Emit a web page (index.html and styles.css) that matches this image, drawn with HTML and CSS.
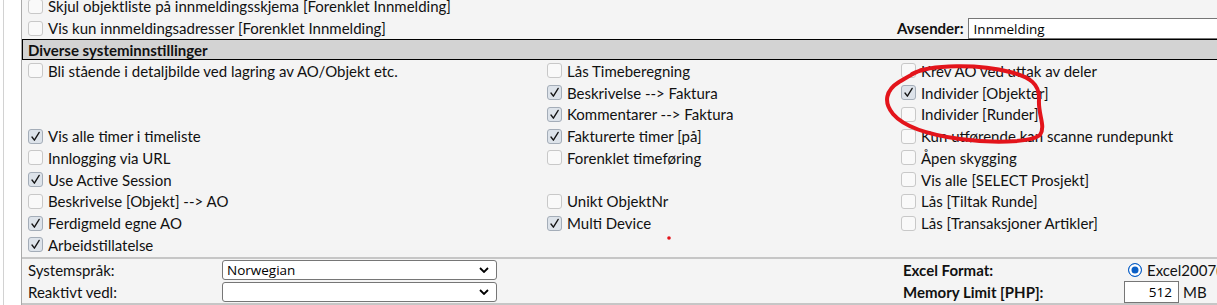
FILE: index.html
```html
<!DOCTYPE html>
<html lang="no">
<head>
<meta charset="utf-8">
<title>Systeminnstillinger</title>
<link rel="stylesheet" href="styles.css">
</head>
<body>
<div class="frame">
  <div class="panel">
    <div class="top">
      <div class="row">
        <label class="opt"><input type="checkbox"><span>Skjul objektliste på innmeldingsskjema [Forenklet Innmelding]</span></label>
      </div>
      <div class="row split">
        <label class="opt"><input type="checkbox"><span>Vis kun innmeldingsadresser [Forenklet Innmelding]</span></label>
        <div class="sender"><b>Avsender:</b><input class="field wide" type="text" value="Innmelding"></div>
      </div>
    </div>
    <div class="head">Diverse systeminnstillinger</div>
    <div class="grid">
      <label class="opt"><input type="checkbox"><span>Bli stående i detaljbilde ved lagring av AO/Objekt etc.</span></label>
      <label class="opt"><input type="checkbox"><span>Lås Timeberegning</span></label>
      <label class="opt"><input type="checkbox"><span>Krev AO ved uttak av deler</span></label>

      <span></span>
      <label class="opt"><input type="checkbox" checked><span>Beskrivelse --&gt; Faktura</span></label>
      <label class="opt"><input type="checkbox" checked><span>Individer [Objekter]</span></label>

      <span></span>
      <label class="opt"><input type="checkbox" checked><span>Kommentarer --&gt; Faktura</span></label>
      <label class="opt"><input type="checkbox"><span>Individer [Runder]</span></label>

      <label class="opt"><input type="checkbox" checked><span>Vis alle timer i timeliste</span></label>
      <label class="opt"><input type="checkbox" checked><span>Fakturerte timer [på]</span></label>
      <label class="opt"><input type="checkbox"><span>Kun utførende kan scanne rundepunkt</span></label>

      <label class="opt"><input type="checkbox"><span>Innlogging via URL</span></label>
      <label class="opt"><input type="checkbox"><span>Forenklet timeføring</span></label>
      <label class="opt"><input type="checkbox"><span>Åpen skygging</span></label>

      <label class="opt"><input type="checkbox" checked><span>Use Active Session</span></label>
      <span></span>
      <label class="opt"><input type="checkbox"><span>Vis alle [SELECT Prosjekt]</span></label>

      <label class="opt"><input type="checkbox"><span>Beskrivelse [Objekt] --&gt; AO</span></label>
      <label class="opt"><input type="checkbox"><span>Unikt ObjektNr</span></label>
      <label class="opt"><input type="checkbox"><span>Lås [Tiltak Runde]</span></label>

      <label class="opt"><input type="checkbox" checked><span>Ferdigmeld egne AO</span></label>
      <label class="opt"><input type="checkbox" checked><span>Multi Device</span></label>
      <label class="opt"><input type="checkbox"><span>Lås [Transaksjoner Artikler]</span></label>

      <label class="opt"><input type="checkbox" checked><span>Arbeidstillatelse</span></label>
      <span></span>
      <span></span>
    </div>
    <div class="bottom">
      <span class="lbl">Systemspråk:</span>
      <select class="sel"><option>Norwegian</option></select>
      <span></span>
      <b class="lbl">Excel Format:</b>
      <label class="radio"><input type="radio" name="xf" checked><span>Excel2007(xlsx)</span></label>

      <span class="lbl">Reaktivt vedl:</span>
      <select class="sel"><option></option></select>
      <span></span>
      <b class="lbl">Memory Limit [PHP]:</b>
      <span class="mem"><input class="field num" type="text" value="512"><span>MB</span></span>
    </div>
  </div>
</div>
<svg class="annot" width="1217" height="305" viewBox="0 0 1217 305" aria-hidden="true">
  <path d="M912 74 C930 64 980 64 1010 72 C1030 77 1040 84 1039 100 C1038 115 1046 126 1040 135 C1030 143 990 143 960 139 C930 135 905 128 893 114 C883 102 886 90 899 82 C906 78 912 74 921 70" fill="none" stroke="#e3141b" stroke-width="4" stroke-linecap="round" stroke-linejoin="round"/>
  <circle cx="669" cy="238" r="1.8" fill="#e3141b"/>
</svg>
</body>
</html>
```
FILE: styles.css
```css
html, body {
  margin: 0;
  padding: 0;
}
body {
  background: #fff;
  width: 1217px;
  height: 305px;
  overflow: hidden;
  position: relative;
  font-family: Lato, "Liberation Sans", sans-serif;
  font-size: 15px;
  color: #111;
}
.frame {
  margin-top: -5px;
  margin-left: 3px;
  border-left: 1px solid #d2d2d2;
  padding-left: 17px;
  height: 330px;
}
.panel {
  width: 1320px;
  height: 100%;
  background: #f4f4f4;
  border-left: 1px solid #a9a9a9;
}
.top {
  padding-left: 6px;
}
.row {
  height: 22px;
  display: flex;
  align-items: center;
}
.row.split {
  display: grid;
  grid-template-columns: 869px 1fr;
  align-items: center;
}
.sender {
  display: flex;
  align-items: center;
  gap: 4px;
  height: 22px;
}
.sender b {
  font-weight: 700;
}
.opt {
  display: flex;
  align-items: center;
  gap: 5px;
  white-space: nowrap;
}
.opt input {
  appearance: none;
  -webkit-appearance: none;
  flex: none;
  width: 15px;
  height: 15px;
  margin: 0;
  border: 1px solid #c8c8c8;
  border-radius: 3px;
  background: #f9f9f9;
}
.opt input:checked {
  border-color: #a4adb8;
  background: #dde3ea url("data:image/svg+xml,%3Csvg xmlns='http://www.w3.org/2000/svg' viewBox='0 0 13 13'%3E%3Cpath d='M3 7 5.4 10.2 10.2 2.4' fill='none' stroke='%23151515' stroke-width='1.35' stroke-linecap='round' stroke-linejoin='round'/%3E%3C/svg%3E") center / 13px 13px no-repeat;
}
.head {
  height: 19px;
  border: 1px solid #000;
  border-right: none;
  background: #d3d3d3;
  padding-left: 5px;
  display: flex;
  align-items: center;
  font-weight: 700;
}
.grid {
  display: grid;
  grid-template-columns: 519px 354px 1fr;
  grid-auto-rows: 21.75px;
  align-items: center;
  padding-left: 6px;
}
.bottom {
  margin-top: 1px;
  border-top: 2px solid #c6c6c6;
  border-bottom: 2px solid #c6c6c6;
  padding: 0 0 0 6px;
  display: grid;
  grid-template-columns: 194px 274px 407px 221px 1fr;
  grid-template-rows: 22px 22px;
  align-items: center;
}
.lbl {
  white-space: nowrap;
}
b.lbl {
  font-weight: 700;
}
.field {
  font-family: "Open Sans", "Liberation Sans", sans-serif;
  font-size: 13.5px;
  color: #000;
  background: #fff;
  border: 1px solid #767676;
  box-sizing: border-box;
  margin: 0;
  outline: none;
}
.field.wide {
  width: 300px;
  height: 21px;
  padding: 0 5px;
  align-self: flex-end;
}
.sel {
  appearance: none;
  -webkit-appearance: none;
  box-sizing: border-box;
  width: 275px;
  height: 20px;
  margin: 0;
  padding: 0 4px;
  border: 1px solid #767676;
  border-radius: 3px;
  background: #fff url("data:image/svg+xml,%3Csvg xmlns='http://www.w3.org/2000/svg' viewBox='0 0 10 6'%3E%3Cpath d='M1 1 5 5 9 1' fill='none' stroke='%23000' stroke-width='1.8'/%3E%3C/svg%3E") right 7px center / 10px 6px no-repeat;
  font-family: "Open Sans", "Liberation Sans", sans-serif;
  font-size: 13.5px;
  color: #000;
  line-height: 18px;
}
.radio {
  display: flex;
  align-items: center;
  gap: 5px;
  white-space: nowrap;
  padding-left: 4px;
}
.radio input {
  appearance: none;
  -webkit-appearance: none;
  flex: none;
  width: 14px;
  height: 14px;
  margin: 0;
  border-radius: 50%;
  border: 1px solid #0a5fc6;
  background: #0a5fc6;
  box-shadow: inset 0 0 0 2.5px #fff;
}
.mem {
  display: flex;
  align-items: center;
  gap: 4px;
}
.field.num {
  width: 55px;
  height: 22px;
  text-align: right;
  padding: 0 6px 0 2px;
}
.annot {
  position: absolute;
  left: 0;
  top: 0;
  pointer-events: none;
}
```
